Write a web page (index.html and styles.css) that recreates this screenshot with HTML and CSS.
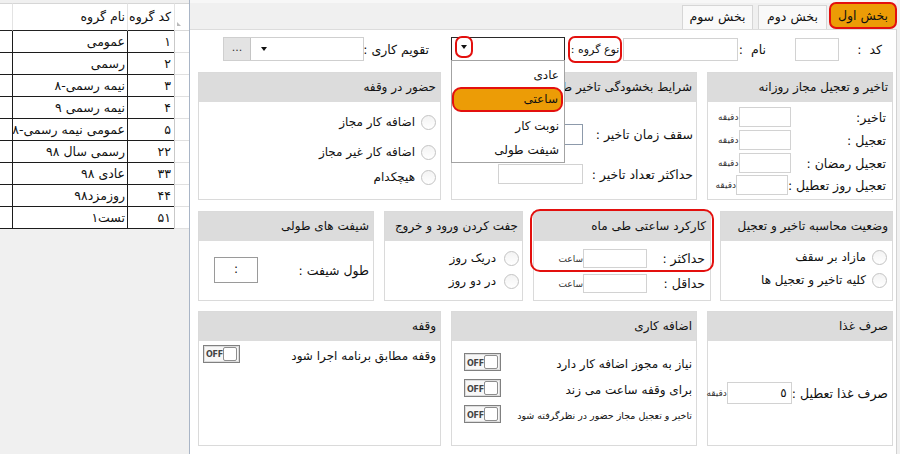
FILE: index.html
```html
<!DOCTYPE html>
<html lang="fa">
<head>
<meta charset="utf-8">
<title>گروه کاری</title>
<link rel="stylesheet" href="styles.css">
</head>
<body>
<div class="app">
  <aside class="side">
    <div class="grid">
      <div class="gr head">
        <div class="c rh"><span class="tri"></span></div>
        <div class="c code">کد گروه</div>
        <div class="c name">نام گروه</div>
        <div class="c part"></div>
      </div>
      <div class="gr"><div class="c rh"></div><div class="c code">۱</div><div class="c name">عمومی</div><div class="c part"></div></div>
      <div class="gr"><div class="c rh"></div><div class="c code">۲</div><div class="c name">رسمی</div><div class="c part"></div></div>
      <div class="gr"><div class="c rh"></div><div class="c code">۳</div><div class="c name">نیمه رسمی-۸</div><div class="c part"></div></div>
      <div class="gr"><div class="c rh"></div><div class="c code">۴</div><div class="c name">نیمه رسمی ۹</div><div class="c part"></div></div>
      <div class="gr"><div class="c rh"></div><div class="c code">۵</div><div class="c name">عمومی نیمه رسمی-۸</div><div class="c part"></div></div>
      <div class="gr"><div class="c rh"></div><div class="c code">۲۲</div><div class="c name">رسمی سال ۹۸</div><div class="c part"></div></div>
      <div class="gr"><div class="c rh"></div><div class="c code">۳۳</div><div class="c name">عادی ۹۸</div><div class="c part"></div></div>
      <div class="gr"><div class="c rh"></div><div class="c code">۴۴</div><div class="c name">روزمزد۹۸</div><div class="c part"></div></div>
      <div class="gr"><div class="c rh"></div><div class="c code">۵۱</div><div class="c name">تست۱</div><div class="c part"></div></div>
    </div>
  </aside>

  <main class="main" dir="rtl">
    <nav class="tabs">
      <div class="tab active">بخش اول</div>
      <div class="tab t2">بخش دوم</div>
      <div class="tab t3">بخش سوم</div>
    </nav>

    <section class="page">
      <div class="toprow">
        <span class="lbl l-code">کد&nbsp;&nbsp;:</span>
        <span class="inp i-code"></span>
        <span class="lbl l-name">نام&nbsp;&nbsp;:</span>
        <span class="inp i-name"></span>
        <span class="lbl l-type mark">نوع گروه :</span>
        <div class="combo c-type">
          <span class="arrowbox mark"><span class="caret"></span></span>
          <ul class="dropdown">
            <li>عادی</li>
            <li class="sel mark">ساعتی</li>
            <li>نوبت کار</li>
            <li>شیفت طولی</li>
          </ul>
        </div>
        <span class="lbl l-cal">تقویم کاری :</span>
        <div class="combo c-cal">
          <span class="cal-text"><span class="caret"></span></span>
          <span class="dots">...</span>
        </div>
      </div>

      <div class="row r2">
        <div class="panel p-daily">
          <div class="ph">تاخیر و تعجیل مجاز روزانه</div>
          <div class="pb">
            <div class="frow"><span class="fl">تاخیر:</span><span class="inp w52"></span><span class="unit">دقیقه</span></div>
            <div class="frow"><span class="fl">تعجیل :</span><span class="inp w52"></span><span class="unit">دقیقه</span></div>
            <div class="frow"><span class="fl">تعجیل رمضان :</span><span class="inp w52"></span><span class="unit">دقیقه</span></div>
            <div class="frow last"><span class="fl">تعجیل روز تعطیل :</span><span class="inp w52"></span><span class="unit">دقیقه</span></div>
          </div>
        </div>
        <div class="panel p-forgive">
          <div class="ph">شرایط بخشودگی تاخیر طی ماه</div>
          <div class="pb">
            <div class="frow f1"><span class="fl">سقف زمان تاخیر :</span><span class="inp w85 focus"></span></div>
            <div class="frow f2"><span class="fl">حداکثر تعداد تاخیر :</span><span class="inp w85"></span></div>
          </div>
        </div>
        <div class="panel p-break">
          <div class="ph">حضور در وقفه</div>
          <div class="pb">
            <div class="radio k1"><span class="dot"></span><span>اضافه کار مجاز</span></div>
            <div class="radio k2"><span class="dot"></span><span>اضافه کار غیر مجاز</span></div>
            <div class="radio k3"><span class="dot"></span><span>هیچکدام</span></div>
          </div>
        </div>
      </div>

      <div class="row r3">
        <div class="panel p-calc">
          <div class="ph">وضعیت محاسبه تاخیر و تعجیل</div>
          <div class="pb">
            <div class="radio"><span class="dot"></span><span>مازاد بر سقف</span></div>
            <div class="radio"><span class="dot"></span><span>کلیه تاخیر و تعجیل ها</span></div>
          </div>
        </div>
        <div class="panel p-hours">
          <span class="hl mark"></span>
          <div class="ph">کارکرد ساعتی طی ماه</div>
          <div class="pb">
            <div class="frow"><span class="fl">حداکثر :</span><span class="inp w64"></span><span class="unit">ساعت</span></div>
            <div class="frow"><span class="fl">حداقل :</span><span class="inp w64"></span><span class="unit">ساعت</span></div>
          </div>
        </div>
        <div class="panel p-pair">
          <div class="ph">جفت کردن ورود و خروج</div>
          <div class="pb">
            <div class="radio"><span class="dot"></span><span>دریک روز</span></div>
            <div class="radio"><span class="dot"></span><span>در دو روز</span></div>
          </div>
        </div>
        <div class="panel p-long">
          <div class="ph">شیفت های طولی</div>
          <div class="pb">
            <div class="frow"><span class="fl">طول شیفت :</span><span class="inp w44 dark">:</span></div>
          </div>
        </div>
      </div>

      <div class="row r4">
        <div class="panel p-lunch">
          <div class="ph">صرف غذا</div>
          <div class="pb">
            <div class="frow"><span class="fl">صرف غذا تعطیل :</span><span class="inp w65 val">٥</span><span class="unit">دقیقه</span></div>
          </div>
        </div>
        <div class="panel p-over">
          <div class="ph">اضافه کاری</div>
          <div class="pb">
            <div class="trow"><span>نیاز به مجوز اضافه کار دارد</span><span class="tog"><span class="off">OFF</span><span class="knob"></span></span></div>
            <div class="trow"><span>برای وقفه ساعت می زند</span><span class="tog"><span class="off">OFF</span><span class="knob"></span></span></div>
            <div class="trow small"><span>تاخیر و تعجیل مجاز حضور در نظرگرفته شود</span><span class="tog"><span class="off">OFF</span><span class="knob"></span></span></div>
          </div>
        </div>
        <div class="panel p-pause">
          <div class="ph">وقفه</div>
          <div class="pb">
            <div class="trow"><span class="tx">وقفه مطابق برنامه اجرا شود</span><span class="tog"><span class="off">OFF</span><span class="knob"></span></span></div>
          </div>
        </div>
      </div>
    </section>
  </main>
</div>
</body>
</html>
```

FILE: styles.css
```css
* { box-sizing: border-box; }
html, body { margin: 0; padding: 0; }
body {
  font-family: Tahoma, "DejaVu Sans", sans-serif;
  font-size: 12px;
  color: #111;
  background: #f0f0f0;
  overflow: hidden;
}
.app { display: flex; width: 900px; height: 454px; }

/* ---------- left grid ---------- */
.side {
  width: 190px;
  flex: none;
  background: #f0f0f0;
  border-right: 1px solid #a9b5c6;
  padding-top: 3px;
}
.grid { width: 189px; background: #fff; }
.gr {
  display: grid;
  grid-template-columns: 15px 47px 115px 12px;
  direction: rtl;
  height: 22px;
  font-size: 12.5px;
}
.gr .c {
  border-bottom: 1px solid #1c1c1c;
  border-left: 1px solid #1c1c1c;
  padding: 0 3px;
  line-height: 21px;
  white-space: nowrap;
  overflow: hidden;
  text-align: right;
}
.gr .rh { border-left-color: #c9c9c9; border-bottom-color: #e0e0e0; background: #fff; }
.gr .part { border-left: none; padding: 0; }
.gr .name { padding-right: 2px; padding-left: 0; }
.head { height: 28px; }
.head .c {
  border-top: 1px solid #d6d6d6;
  border-left-color: #e3e3e3;
  border-bottom-color: #222;
  line-height: 26px;
}
.head .rh { display: flex; align-items: flex-end; justify-content: flex-end; padding: 0 0 4px 2px; border-bottom-color: #d9d9d9; }
.tri {
  width: 0; height: 0;
  border-left: 4px solid transparent;
  border-bottom: 4px solid #b8b8b8;
  display: block;
  transform: scaleX(-1);
}

/* ---------- main ---------- */
.main {
  flex: 1;
  display: flex;
  flex-direction: column;
  padding-right: 3px;
  background: #f0f0f0;
}
.tabs {
  height: 29px;
  flex: none;
  display: flex;
  align-items: flex-end;
  background: linear-gradient(#f7f7f7 0 3px, #f0f0f0 3px);
}
.tab {
  height: 24px;
  line-height: 22px;
  text-align: center;
  font-size: 12.5px;
  border: 1px solid #d6d6d6;
  border-bottom: none;
  background: #f9f9f9;
}
.tab.active {
  width: 68px;
  height: 27px;
  line-height: 23px;
  background: #ec9c06;
  border: 2px solid #e3100e;
  border-radius: 7px;
  margin-left: 2px;
}
.tab.t2 { width: 69px; margin-left: 5px; }
.tab.t3 { width: 71px; }

.page {
  flex: 1;
  background: #fff;
  border-top: 1px solid #dcdcdc;
  border-right: 1px solid #d2d2d2;
  padding: 6px 3px 0 8px;
}

/* top row */
.toprow { display: flex; align-items: center; height: 26px; }
.lbl { white-space: nowrap; font-size: 12.5px; }
.l-code { width: 54px; padding-right: 11px; }
.l-name { width: 57px; padding-right: 29px; }
.l-type {
  width: 54px;
  height: 27px;
  margin-right: 1px;
  margin-left: 3px;
  font-size: 11px;
  display: flex;
  align-items: center;
  justify-content: center;
  padding: 0;
}
.mark { border: 2px solid #e3100e; border-radius: 7px; }
.l-cal { width: 87px; padding-right: 22px; }

.inp {
  display: block;
  height: 23px;
  border: 1px solid #d2d2d2;
  background: #fff;
  flex: none;
}
.i-code { width: 44px; }
.i-name { width: 115px; }

.combo {
  position: relative;
  height: 24px;
  display: flex;
  flex: none;
}
.c-type { width: 114px; border: 1px solid #2a2a2a; }
.arrowbox {
  position: absolute;
  left: 3px;
  top: -2px;
  width: 18px;
  height: 22px;
  display: flex;
  align-items: center;
  justify-content: center;
}
.caret {
  display: block;
  width: 0; height: 0;
  border-left: 3px solid transparent;
  border-right: 3px solid transparent;
  border-top: 4px solid #111;
}
.c-cal { width: 141px; border: 1px solid #cfcfcf; }
.cal-text { flex: 1; display: flex; align-items: center; justify-content: flex-end; padding-left: 10px; }
.dots {
  width: 27px;
  background: #e3e3e3;
  border-right: 1px solid #c4c4c4;
  text-align: center;
  line-height: 20px;
  font-size: 11px;
  color: #333;
}

.dropdown {
  position: absolute;
  top: 100%;
  right: -1px;
  width: 114px;
  height: 103px;
  margin: 0;
  padding: 2px 0 0;
  list-style: none;
  background: #fff;
  border: 1px solid #a3a3a3;
  z-index: 5;
}
.dropdown li {
  height: 24px;
  line-height: 24px;
  padding-right: 5px;
  font-size: 12px;
}
.dropdown li.sel {
  height: 25px;
  line-height: 21px;
  margin: 0 1px 2px 0;
  padding-right: 3px;
  background: #ec9c06;
  border-radius: 9px;
}

/* panel rows */
.row { display: flex; gap: 10px; }
.r2 { margin-top: 10px; height: 128px; }
.r3 { margin-top: 11px; height: 90px; gap: 0; }
.r4 { margin-top: 10px; height: 135px; }
.p-calc { margin-left: 9px; }
.p-hours { margin-left: 10px; }
.p-pair { margin-left: 10px; }

.panel {
  position: relative;
  border: 1px solid #dadada;
  background: #fff;
  flex: none;
  display: flex;
  flex-direction: column;
}
.ph {
  height: 29px;
  line-height: 29px;
  background: #dcdcdc;
  padding-right: 4px;
  font-size: 12px;
  white-space: nowrap;
  overflow: hidden;
  flex: none;
}
.pb { flex: 1; }

.p-daily { width: 186px; }
.p-forgive { width: 246px; }
.p-break { width: 243px; }
.p-calc { width: 173px; }
.p-hours { width: 178px; }
.p-pair { width: 139px; }
.p-long { width: 176px; }
.p-lunch { width: 186px; }
.p-over { width: 246px; }
.p-pause { width: 243px; }

.frow { display: flex; align-items: center; height: 20px; }
.fl { flex: 1; white-space: nowrap; font-size: 12.5px; }
.unit { font-size: 9px; color: #333; white-space: nowrap; }
.w52 { width: 52px; height: 20px; }
.w85 { width: 85px; height: 20px; }
.w64 { width: 64px; height: 19px; }
.w44 { width: 44px; height: 26px; }
.w65 { width: 65px; height: 22px; }
.focus { border-color: #8d9aab; height: 21px; }
.dark { border-color: #9a9a9a; text-align: center; line-height: 22px; }
.val { text-align: right; padding-right: 4px; line-height: 20px; }

/* daily */
.p-daily .pb { padding: 5px 4px 0 10px; }
.p-daily .frow { margin-bottom: 3px; }
.p-daily .frow.last { margin-top: -1px; }
.p-daily .fl { padding-right: 2px; }
.p-daily .unit { width: 21px; text-align: left; }

/* forgive */
.p-forgive .pb { padding: 22px 3px 0 46px; }
.p-forgive .f1 { height: 21px; }
.p-forgive .f2 { margin-top: 19px; }

/* radios */
.radio { display: flex; align-items: center; height: 16px; white-space: nowrap; font-size: 12px; }
.dot {
  width: 15px; height: 15px;
  border-radius: 50%;
  border: 1px solid #c3c3c3;
  background: linear-gradient(#f3f3f3, #fff);
  margin-left: 6px;
  flex: none;
}
.p-break .pb { padding: 12px 4px 0 0; }
.p-break .k2 { margin-top: 14px; }
.p-break .k3 { margin-top: 9px; }

.p-calc .pb { padding: 8px 5px 0 0; }
.p-calc .radio + .radio { margin-top: 7px; }

.p-pair .pb { padding: 9px 3px 0 0; }
.p-pair .dot { margin-left: 8px; }
.p-pair .radio + .radio { margin-top: 7px; }

/* hours */
.p-hours .pb { padding: 8px 5px 0 28px; }
.p-hours .frow { height: 19px; }
.p-hours .frow + .frow { margin-top: 6px; }
.p-hours .unit { width: 21px; text-align: left; }
.hl {
  position: absolute;
  left: -4px;
  top: -3px;
  width: 184px;
  height: 63px;
  border-radius: 10px;
  pointer-events: none;
}

/* long shift */
.p-long .pb { padding: 16px 4px 0 15px; }
.p-long .frow { height: 26px; }

/* lunch */
.p-lunch .pb { padding: 41px 4px 0 4px; }
.p-lunch .frow { height: 22px; }
.p-lunch .unit { width: 23px; text-align: left; }

/* toggles */
.trow {
  display: flex;
  align-items: center;
  justify-content: space-between;
  height: 18px;
  white-space: nowrap;
  font-size: 12px;
}
.trow.small { font-size: 9.5px; }
.p-over .pb { padding: 12px 4px 0 12px; }
.p-over .trow + .trow { margin-top: 8px; }
.p-over .trow span:first-child { padding-top: 3px; }
.p-pause .pb { padding: 4px 4px 0 4px; }
.p-pause .trow { align-items: flex-start; }
.p-pause .tx { padding-top: 4px; }
.tog {
  width: 37px;
  height: 18px;
  border: 1px solid #808080;
  box-shadow: inset 0 0 0 1px #dcdcdc;
  background: #f7f7f7;
  display: flex;
  align-items: center;
  direction: ltr;
  padding: 1px 2px 1px 2px;
  flex: none;
}
.off {
  flex: 1;
  font-family: "DejaVu Sans", sans-serif;
  font-size: 8px;
  font-weight: bold;
  color: #444;
  letter-spacing: -0.3px;
}
.knob {
  width: 14px;
  height: 14px;
  border: 1px solid #8e8e8e;
  border-radius: 2px;
  background: #fff;
}
```
